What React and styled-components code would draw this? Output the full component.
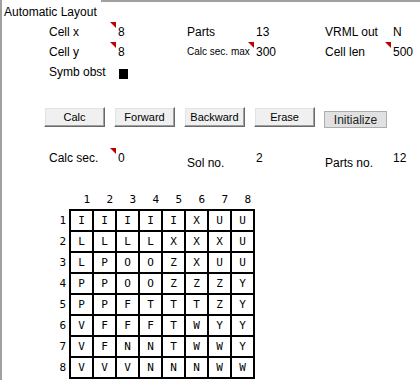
import React from 'react';
import styled, { createGlobalStyle } from 'styled-components';

const GlobalStyle = createGlobalStyle`
  body {
    margin: 0;
    background: #fff;
    font-family: 'Liberation Sans', Arial, sans-serif;
    color: #000;
  }
`;

const Frame = styled.div`
  position: relative;
  height: 380px;
  box-sizing: border-box;
  border-left: 2px solid #a0a0a0;
  overflow: hidden;

  &::before {
    content: '';
    position: absolute;
    left: -2px;
    top: 272px;
    width: 2px;
    height: 23px;
    background: #217346;
  }
`;

const TitleRow = styled.div`
  display: flex;
  align-items: flex-start;
  height: 22px;
`;

const Title = styled.div`
  padding: 4px 0 0 2px;
  font-size: 12px;
  line-height: 16px;
  white-space: nowrap;
`;

const Rule = styled.div`
  flex: 1;
  margin-left: 4px;
  border-top: 2px solid #a0a0a0;
`;

const Fields = styled.div`
  display: grid;
  grid-template-columns: 68px 70px 68px 70px 67px 1fr;
  grid-auto-rows: 20px;
  padding-left: 46px;
  margin-top: ${(p) => p.$top || 0}px;
  font-size: 12px;
  line-height: 20px;
`;

const Label = styled.div`
  position: relative;
  white-space: nowrap;
  font-size: ${(p) => (p.$small ? '10px' : '12px')};
  padding-top: ${(p) => (p.$drop ? '5px' : '0')};
  padding-left: 1px;
`;

const Marker = styled.span`
  position: absolute;
  top: 0;
  right: 0;
  width: 0;
  height: 0;
  border-top: 6px solid #c00000;
  border-left: 6px solid transparent;
`;

const Value = styled.div`
  padding-left: 2px;
  white-space: nowrap;
`;

const Swatch = styled.span`
  display: block;
  width: 9px;
  height: 10px;
  margin: 7px 0 0 1px;
  background: #000;
`;

const ButtonRow = styled.div`
  display: flex;
  align-items: flex-start;
  gap: 9px;
  padding-left: 42px;
  margin-top: 25px;
`;

const FormButton = styled.button`
  width: 61px;
  height: 20px;
  padding: 0;
  font-family: 'Liberation Sans', Arial, sans-serif;
  font-size: 11px;
  color: #000;
  background: #f0f0f0;
  border: 1px solid;
  border-color: #fff #696969 #696969 #fff;
  box-shadow: inset -1px -1px #a0a0a0, inset 1px 1px #e3e3e3;
  cursor: pointer;
`;

const PlainButton = styled.button`
  width: 63px;
  height: 17px;
  margin-top: 4px;
  padding: 0;
  font-family: 'Liberation Sans', Arial, sans-serif;
  font-size: 12px;
  color: #222;
  background: #e1e1e1;
  border: 1px solid #adadad;
  cursor: pointer;
`;

const Board = styled.div`
  margin: 22px 0 0 52px;
  font-family: 'DejaVu Sans Mono', 'Liberation Mono', monospace;
  font-size: 11px;
`;

const HeaderRow = styled.div`
  display: grid;
  grid-template-columns: 17px repeat(8, 23px);
  height: 19px;
`;

const ColHead = styled.div`
  align-self: end;
  text-align: right;
  padding: 0 4px 3px 0;
  line-height: 13px;
`;

const Body = styled.div`
  display: flex;
`;

const RowHeads = styled.div`
  display: grid;
  grid-template-rows: repeat(8, 19px);
  row-gap: 2px;
  width: 15px;
  padding-top: 2px;
`;

const RowHead = styled.div`
  text-align: right;
  padding-right: 3px;
  line-height: 19px;
`;

const Cells = styled.div`
  display: grid;
  grid-template-columns: repeat(8, 21px);
  grid-template-rows: repeat(8, 19px);
  gap: 2px;
  padding: 2px;
  background: #000;
`;

const Cell = styled.div`
  background: #fff;
  text-align: center;
  line-height: 19px;
`;

const board = [
  'IIIIIXUU',
  'LLLLXXXU',
  'LPOOZXUU',
  'PPOOZZZY',
  'PPFTTTZY',
  'VFFFTWYY',
  'VFNNTWWY',
  'VVVNNNWW',
];

const nums = [1, 2, 3, 4, 5, 6, 7, 8];

export default function App() {
  return (
    <>
      <GlobalStyle />
      <Frame>
        <TitleRow>
          <Title>Automatic Layout</Title>
          <Rule />
        </TitleRow>

        <Fields>
          <Label>Cell x<Marker /></Label>
          <Value>8</Value>
          <Label>Parts</Label>
          <Value>13</Value>
          <Label>VRML out</Label>
          <Value>N</Value>

          <Label>Cell y<Marker /></Label>
          <Value>8</Value>
          <Label $small>Calc sec. max<Marker /></Label>
          <Value>300</Value>
          <Label>Cell len<Marker /></Label>
          <Value>500</Value>

          <Label>Symb obst</Label>
          <Value><Swatch /></Value>
        </Fields>

        <ButtonRow>
          <FormButton>Calc</FormButton>
          <FormButton>Forward</FormButton>
          <FormButton>Backward</FormButton>
          <FormButton>Erase</FormButton>
          <PlainButton>Initialize</PlainButton>
        </ButtonRow>

        <Fields $top={20}>
          <Label>Calc sec.<Marker /></Label>
          <Value>0</Value>
          <Label $drop>Sol no.</Label>
          <Value>2</Value>
          <Label $drop>Parts no.</Label>
          <Value>12</Value>
        </Fields>

        <Board>
          <HeaderRow>
            <span />
            {nums.map((n) => (
              <ColHead key={n}>{n}</ColHead>
            ))}
          </HeaderRow>
          <Body>
            <RowHeads>
              {nums.map((n) => (
                <RowHead key={n}>{n}</RowHead>
              ))}
            </RowHeads>
            <Cells>
              {board.map((row, r) =>
                row.split('').map((ch, c) => <Cell key={`${r}-${c}`}>{ch}</Cell>)
              )}
            </Cells>
          </Body>
        </Board>
      </Frame>
    </>
  );
}
